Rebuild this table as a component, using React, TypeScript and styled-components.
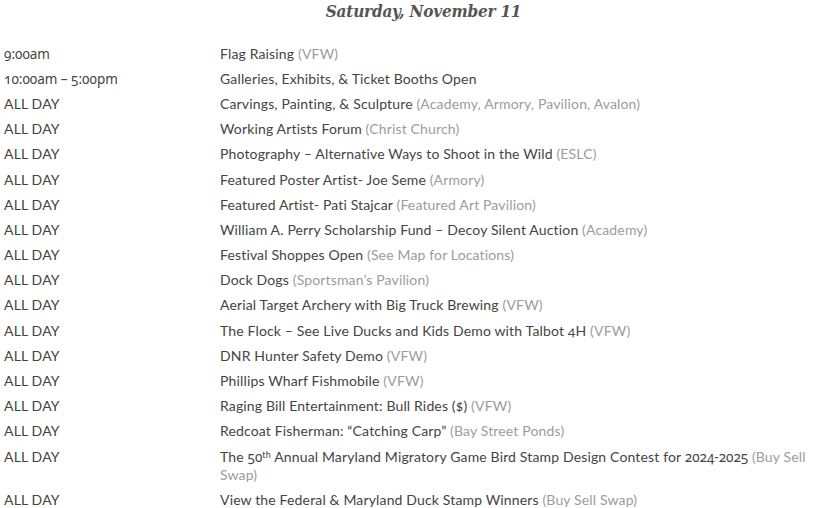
import React from "react";
import styled, { createGlobalStyle } from "styled-components";

const Global = createGlobalStyle`
  html, body { margin: 0; padding: 0; background: #ffffff; }
  body { font-family: "Lato", "Noto Sans", sans-serif; }
`;

const Page = styled.div`
  width: 829px;
  height: 508px;
  overflow: hidden;
  background: #fff;
`;

const Heading = styled.h2`
  margin: 0;
  padding: 0 0 0 18px;
  height: 41px;
  text-align: center;
  font-family: "DejaVu Serif Condensed", "DejaVu Serif", serif;
  font-stretch: condensed;
  font-style: italic;
  font-weight: 600;
  font-size: 17px;
  line-height: 22px;
  color: #555555;
  letter-spacing: -0.2px;
`;

const Table = styled.div`
  display: grid;
  grid-template-columns: 216px 600px;
  padding-left: 4px;
`;

const Cell = styled.div`
  padding: 3.6px 0;
  font-size: 14px;
  line-height: 18px;
  letter-spacing: 0.15px;
  color: #444444;
  font-feature-settings: "onum" 1;
`;

const Digits = styled.span`
  font-family: "Noto Sans", sans-serif;
  font-feature-settings: "onum" 1;
  font-size: 13.5px;
  letter-spacing: 0;
`;

const Where = styled.span`
  color: #9c9c9c;
`;

const Sup = styled.span`
  font-size: 9px;
  vertical-align: 4px;
  line-height: 0;
`;

type Item = { time: React.ReactNode; title: React.ReactNode; where?: string };

const items: Item[] = [
  { time: <Digits>9:00am</Digits>, title: "Flag Raising", where: "VFW" },
  { time: <Digits>10:00am – 5:00pm</Digits>, title: "Galleries, Exhibits, & Ticket Booths Open" },
  { time: "ALL DAY", title: "Carvings, Painting, & Sculpture", where: "Academy, Armory, Pavilion, Avalon" },
  { time: "ALL DAY", title: "Working Artists Forum", where: "Christ Church" },
  { time: "ALL DAY", title: "Photography – Alternative Ways to Shoot in the Wild", where: "ESLC" },
  { time: "ALL DAY", title: "Featured Poster Artist- Joe Seme", where: "Armory" },
  { time: "ALL DAY", title: "Featured Artist- Pati Stajcar", where: "Featured Art Pavilion" },
  { time: "ALL DAY", title: "William A. Perry Scholarship Fund – Decoy Silent Auction", where: "Academy" },
  { time: "ALL DAY", title: "Festival Shoppes Open", where: "See Map for Locations" },
  { time: "ALL DAY", title: "Dock Dogs", where: "Sportsman’s Pavilion" },
  { time: "ALL DAY", title: "Aerial Target Archery with Big Truck Brewing", where: "VFW" },
  { time: "ALL DAY", title: "The Flock – See Live Ducks and Kids Demo with Talbot 4H", where: "VFW" },
  { time: "ALL DAY", title: "DNR Hunter Safety Demo", where: "VFW" },
  { time: "ALL DAY", title: "Phillips Wharf Fishmobile", where: "VFW" },
  { time: "ALL DAY", title: "Raging Bill Entertainment: Bull Rides ($)", where: "VFW" },
  { time: "ALL DAY", title: "Redcoat Fisherman: “Catching Carp”", where: "Bay Street Ponds" },
  {
    time: "ALL DAY",
    title: (
      <>
        The <Digits>50</Digits>
        <Sup>th</Sup> Annual Maryland Migratory Game Bird Stamp Design Contest for <Digits>2024-2025</Digits>
      </>
    ),
    where: "Buy Sell Swap",
  },
  { time: "ALL DAY", title: "View the Federal & Maryland Duck Stamp Winners", where: "Buy Sell Swap" },
];

export default function App() {
  return (
    <Page>
      <Global />
      <Heading>Saturday, November 11</Heading>
      <Table>
        {items.map((it, i) => (
          <React.Fragment key={i}>
            <Cell>{it.time}</Cell>
            <Cell>
              {it.title}
              {it.where && <Where> ({it.where})</Where>}
            </Cell>
          </React.Fragment>
        ))}
      </Table>
    </Page>
  );
}
